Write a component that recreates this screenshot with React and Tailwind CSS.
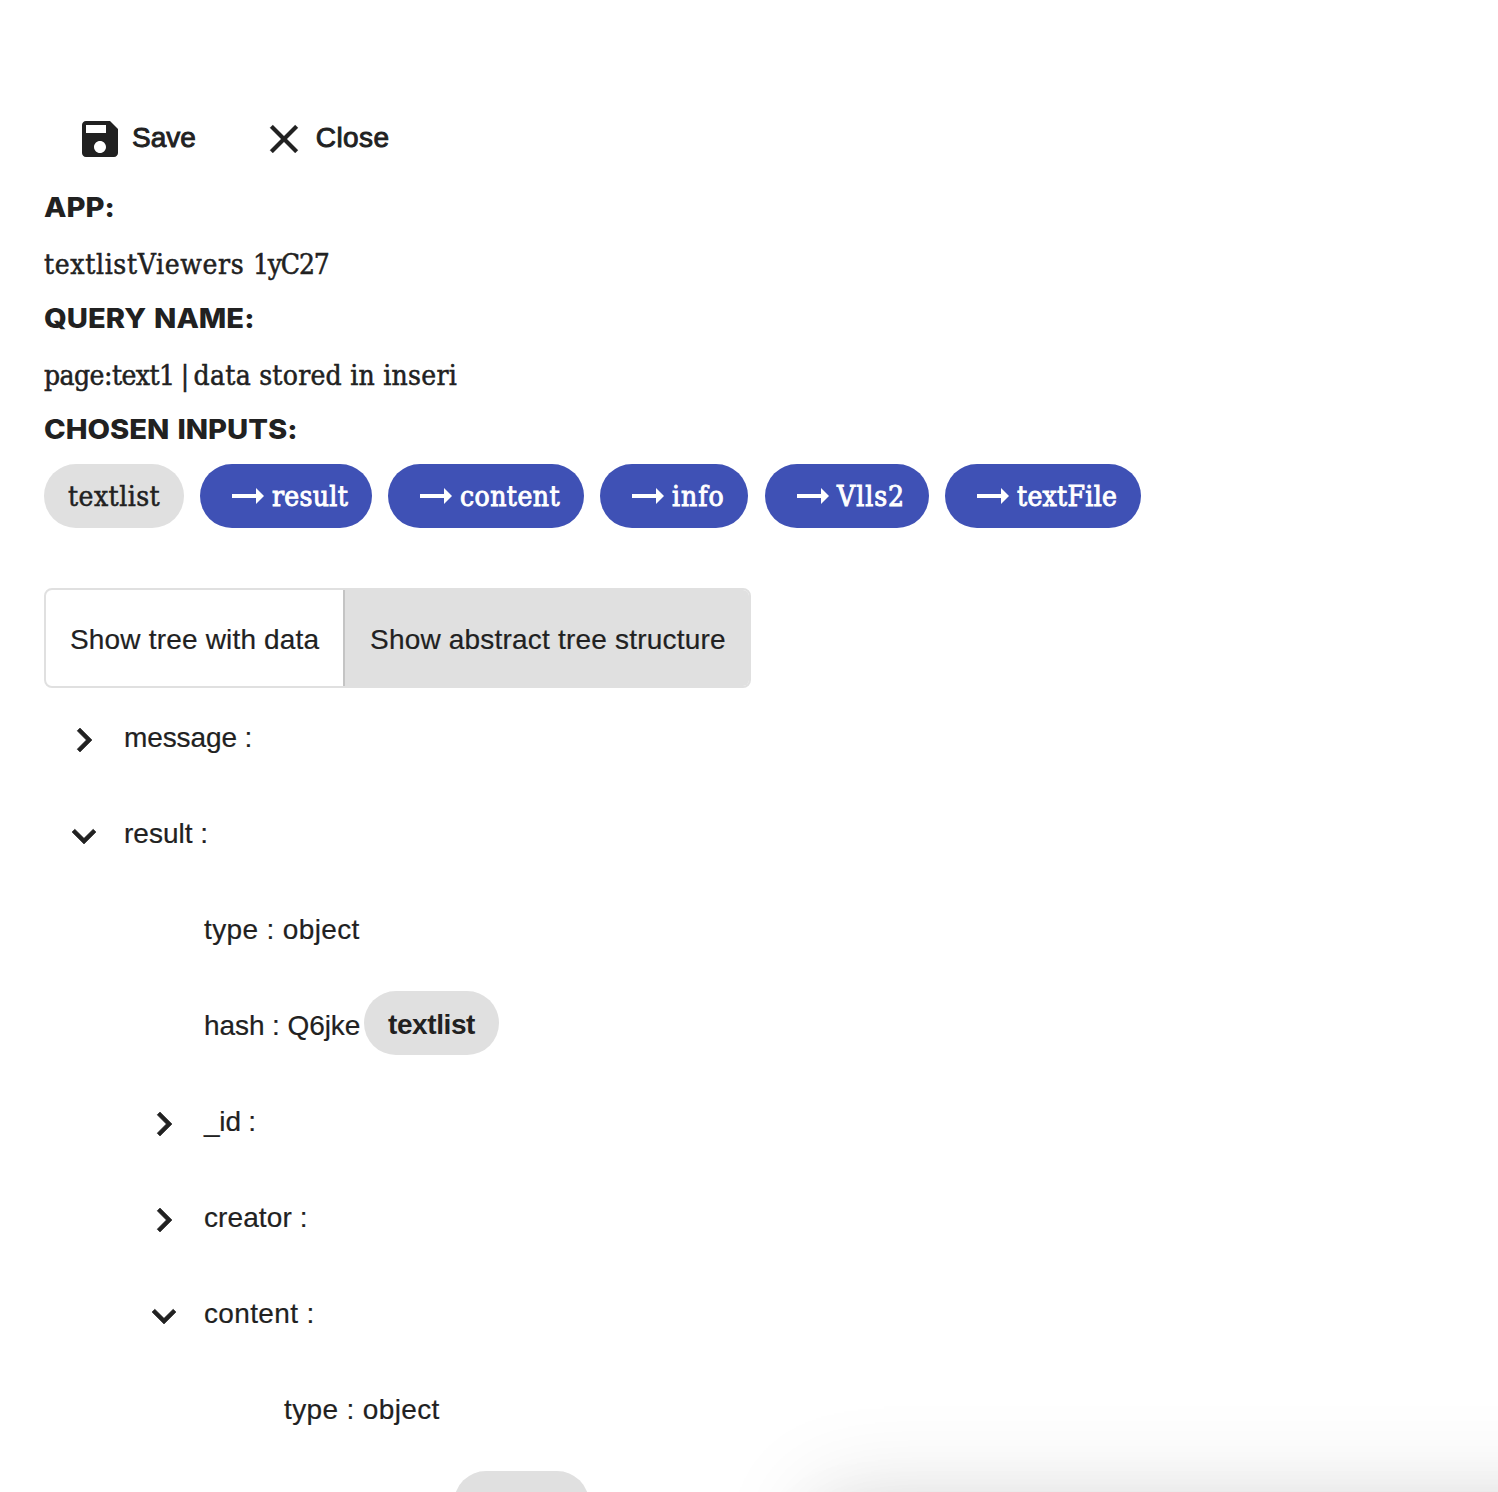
function SaveIcon() {
  return (
    <svg className="block size-12 shrink-0" viewBox="0 0 24 24" fill="currentColor" stroke="none">
      <path d="M17 3H5c-1.11 0-2 .9-2 2v14c0 1.1.89 2 2 2h14c1.1 0 2-.9 2-2V7l-4-4zm-5 16c-1.66 0-3-1.34-3-3s1.34-3 3-3 3 1.34 3 3-1.34 3-3 3zm3-10H5V5h10v4z" />
    </svg>
  );
}

function CloseIcon() {
  return (
    <svg className="block size-12 shrink-0" viewBox="0 0 24 24" fill="currentColor" stroke="currentColor" strokeWidth="0.15">
      <path d="M19 6.41L17.59 5 12 10.59 6.41 5 5 6.41 10.59 12 5 17.59 6.41 19 12 13.41 17.59 19 19 17.59 13.41 12z" />
    </svg>
  );
}

function Chevron({ open }) {
  return (
    <svg className="block size-12" viewBox="0 0 24 24" fill="currentColor" stroke="currentColor" strokeWidth="0.3">
      {open ? (
        <path d="M16.59 8.59L12 13.17 7.41 8.59 6 10l6 6 6-6z" />
      ) : (
        <path d="M10 6L8.59 7.41 13.17 12l-4.58 4.59L10 18l6-6z" />
      )}
    </svg>
  );
}

function Arrow() {
  return (
    <svg className="mr-2 ml-2 block h-4 w-8 shrink-0" viewBox="0 0 32 16" fill="currentColor">
      <path d="M0 6h24V0l8 8-8 8v-6H0z" />
    </svg>
  );
}

function Heading({ children }) {
  return (
    <h3 className="h-[34px] pt-px font-['Inter',sans-serif] text-[27px] leading-[34px] font-extrabold [font-feature-settings:'calt'_0]">
      <span className="inline-block origin-left scale-x-[1.08] [word-spacing:1.5px] whitespace-nowrap">{children}</span>
    </h3>
  );
}

const slab = "font-['DejaVu_Serif_Condensed','DejaVu_Serif',serif]";

const inputs = [
  { label: "result", size: "w-[172px] tracking-[0.3px]" },
  { label: "content", size: "w-[196px] tracking-[0.45px]" },
  { label: "info", size: "w-[148px] tracking-[0.95px]" },
  { label: "Vlls2", size: "ml-px w-[164px] tracking-[0.95px]" },
  { label: "textFile", size: "w-[196px] tracking-[0.3px]" },
];

const nodes = [
  { label: "message :", indent: "pl-0", open: false, spacing: "tracking-[-0.1px]" },
  { label: "result :", indent: "pl-0", open: true, spacing: "tracking-normal" },
  { label: "type : object", indent: "pl-20", spacing: "tracking-[0.36px]" },
  { label: "hash : Q6jke", indent: "pl-20", spacing: "tracking-[-0.08px]", chip: "textlist" },
  { label: "_id :", indent: "pl-20", open: false, spacing: "tracking-[-0.2px]" },
  { label: "creator :", indent: "pl-20", open: false, spacing: "tracking-[0.1px]" },
  { label: "content :", indent: "pl-20", open: true, spacing: "tracking-[0.35px]" },
  { label: "type : object", indent: "pl-40", spacing: "tracking-[0.36px]" },
  { label: "", indent: "pl-[170px]", chip: " " },
];

function TreeNode({ node }) {
  return (
    <li className={`flex h-24 shrink-0 items-center ${node.indent}`}>
      <span className="flex w-20 shrink-0 justify-center pt-1">
        {node.open !== undefined && <Chevron open={node.open} />}
      </span>
      <span className={`w-40 [-webkit-text-stroke:0.2px_currentColor] whitespace-nowrap ${node.spacing ?? ""}`}>
        {node.label}
      </span>
      {node.chip && (
        <span className="mb-[6px] flex h-16 w-[135px] items-center justify-center rounded-full bg-[#e0e0e0] pt-1 font-bold tracking-[-0.4px]">
          {node.chip}
        </span>
      )}
    </li>
  );
}

export default function App() {
  return (
    <div className="relative h-screen overflow-hidden bg-white px-11 pt-[103px] font-['Liberation_Sans',Arial,sans-serif] text-[28px] leading-8 text-[#212121]">
      <div className="flex h-[72px] items-center pl-8">
        <button className="flex items-center [-webkit-text-stroke:0.9px_currentColor]">
          <SaveIcon />
          <span className="mb-0.5 ml-2">Save</span>
        </button>
        <button className="ml-16 flex items-center [-webkit-text-stroke:0.9px_currentColor]">
          <CloseIcon />
          <span className="mb-0.5 ml-2 tracking-[0.4px]">Close</span>
        </button>
      </div>

      <section className="flex flex-col pt-[15px]">
        <Heading>APP:</Heading>
        <p className={`mt-6 mb-[19px] h-[34px] leading-[34px] whitespace-nowrap [-webkit-text-stroke:0.5px_currentColor] ${slab}`}>
          <span className="tracking-[0.65px]">textlistViewers </span>
          <span className="tracking-[-1.2px]">1yC27</span>
        </p>
        <Heading>QUERY NAME:</Heading>
        <p className={`mt-6 mb-[19px] h-[34px] leading-[34px] whitespace-nowrap [-webkit-text-stroke:0.5px_currentColor] ${slab}`}>
          <span className="tracking-[-0.55px]">page:text1</span>
          <span className="tracking-[-1.8px]"> | </span>
          <span className="tracking-[0.26px]">data stored in inseri</span>
        </p>
        <Heading>CHOSEN INPUTS:</Heading>
      </section>

      <div className={`mt-[18px] flex gap-4 ${slab}`}>
        <span className="flex h-16 w-[140px] items-center rounded-full bg-[#e0e0e0] pt-0.5 pl-6 tracking-[0.45px] [-webkit-text-stroke:0.5px_currentColor]">
          textlist
        </span>
        {inputs.map((input) => (
          <span
            key={input.label}
            className={`flex h-16 items-center rounded-full bg-[#3f51b5] pl-6 text-white ${input.size}`}
          >
            <Arrow />
            <span className="pt-0.5 [-webkit-text-stroke:0.9px_currentColor]">{input.label}</span>
          </span>
        ))}
      </div>

      <div className="mt-[60px] flex h-[100px] w-[707px] overflow-hidden rounded-lg border-2 border-[#e0e0e0] [-webkit-text-stroke:0.2px_currentColor]">
        <button className="w-[297px] pt-1 pl-6 text-left tracking-[0.18px] whitespace-nowrap">
          Show tree with data
        </button>
        <button className="flex-1 border-l-2 border-[#c4c4c4] bg-[#e0e0e0] pt-1 pl-[25px] text-left tracking-[0.2px] whitespace-nowrap">
          Show abstract tree structure
        </button>
      </div>

      <ul className="mt-[2px] flex flex-col">
        {nodes.map((node, i) => (
          <TreeNode key={i} node={node} />
        ))}
      </ul>

      <div className="absolute top-full left-[828px] h-[400px] w-[1400px] bg-white shadow-[0_22px_30px_-14px_rgba(0,0,0,0.2),0_48px_76px_6px_rgba(0,0,0,0.14),0_18px_92px_16px_rgba(0,0,0,0.12)]" />
    </div>
  );
}
